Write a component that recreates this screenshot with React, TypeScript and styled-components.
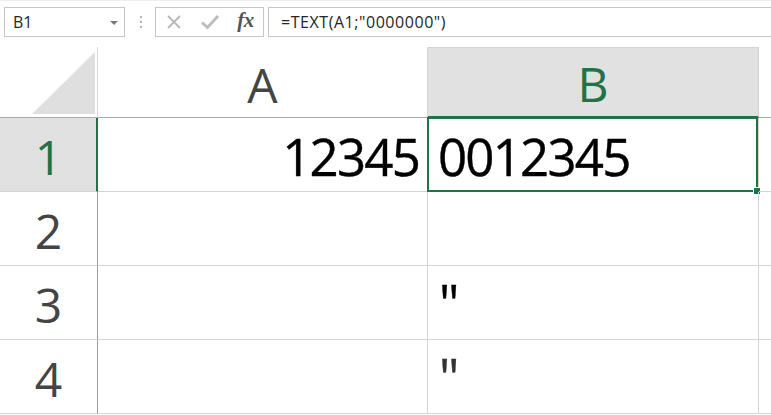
import React from "react";
import styled, { createGlobalStyle } from "styled-components";

const GREEN = "#217346";

const GlobalStyle = createGlobalStyle`
  html, body { margin: 0; padding: 0; background: #fff; }
  body { font-family: "Open Sans", "Noto Sans", sans-serif; overflow: hidden; }
  #root { width: 771px; height: 415px; }
`;

const Page = styled.div`
  width: 771px;
  height: 415px;
  overflow: hidden;
  background: #fff;
  display: flex;
  flex-direction: column;
`;

const FormulaBar = styled.div`
  display: flex;
  align-items: center;
  height: 47px;
  box-sizing: border-box;
  padding: 6px 0 10px 4px;
  border-top: 1px solid #efefef;
  flex-shrink: 0;
`;

const NameBox = styled.div`
  width: 121px;
  height: 30px;
  box-sizing: border-box;
  border: 1px solid #c6c6c6;
  display: flex;
  align-items: center;
  justify-content: space-between;
  padding: 0 6px 0 8px;
  font-size: 16px;
  color: #262626;
`;

const DropArrow = styled.span`
  width: 0;
  height: 0;
  border-left: 4px solid transparent;
  border-right: 4px solid transparent;
  border-top: 4px solid #7a7a7a;
  margin-top: 1px;
`;

const Grip = styled.div`
  display: flex;
  flex-direction: column;
  gap: 3px;
  margin: 0 14px 0 15px;
`;

const GripDot = styled.span`
  width: 2px;
  height: 2px;
  background: #b4b4b4;
`;

const ButtonGroup = styled.div`
  width: 109px;
  height: 30px;
  box-sizing: border-box;
  border: 1px solid #c6c6c6;
  display: grid;
  grid-template-columns: 36px 36px 35px;
  align-items: center;
  justify-items: center;
  margin-left: -1px;
`;

const IconSlot = styled.span`
  display: flex;
  align-items: center;
  justify-content: center;
`;

const Fx = styled.span`
  font-family: "Liberation Serif", "DejaVu Serif", serif;
  font-style: italic;
  font-weight: 700;
  font-size: 21px;
  color: #555;
  letter-spacing: -0.5px;
  margin-top: -3px;
`;

const FormulaInput = styled.div`
  flex: 1;
  height: 30px;
  box-sizing: border-box;
  margin-left: 4px;
  border: 1px solid #c6c6c6;
  border-right: none;
  display: flex;
  align-items: center;
  padding-left: 12px;
  font-size: 16px;
  letter-spacing: 0.55px;
  color: #262626;
`;

const Sheet = styled.div`
  display: grid;
  grid-template-columns: 98px 330px 331px 1fr;
  grid-template-rows: 71px repeat(4, 74px);
`;

const Corner = styled.div`
  box-sizing: border-box;
  border-right: 1px solid #d8d8d8;
  border-bottom: 1px solid #ababab;
  display: flex;
  align-items: flex-end;
  justify-content: flex-end;
  padding: 0 2px 3px 0;
`;

const ColHeader = styled.div<{ $selected?: boolean; $blank?: boolean }>`
  box-sizing: border-box;
  background: ${(p) => (p.$selected ? "#e1e1e1" : "#fff")};
  border-top: 1px solid ${(p) => (p.$selected ? "#d4d4d4" : "#fff")};
  border-right: 1px solid ${(p) => (p.$blank ? "#fff" : "#d4d4d4")};
  border-bottom: ${(p) => (p.$selected ? `2px solid ${GREEN}` : "1px solid #ababab")};
  color: ${(p) => (p.$selected ? GREEN : "#444")};
  font-size: 48px;
  line-height: 1;
  display: flex;
  align-items: center;
  justify-content: center;
  padding-top: 4px;
`;

const RowHeader = styled.div<{ $selected?: boolean }>`
  box-sizing: border-box;
  background: ${(p) => (p.$selected ? "#e1e1e1" : "#fff")};
  border-right: ${(p) => (p.$selected ? `2px solid ${GREEN}` : "1px solid #9b9b9b")};
  border-bottom: 1px solid #d4d4d4;
  color: ${(p) => (p.$selected ? GREEN : "#444")};
  font-size: 48px;
  line-height: 1;
  display: flex;
  align-items: center;
  justify-content: center;
  padding: 4px 0 0 ${(p) => (p.$selected ? "1px" : "0")};
`;

const Cell = styled.div<{ $align?: "left" | "right"; $tone?: string }>`
  position: relative;
  box-sizing: border-box;
  border-right: 1px solid #d4d4d4;
  border-bottom: 1px solid #d4d4d4;
  font-family: "Open Sans", "Noto Sans", sans-serif;
  font-size: 51px;
  letter-spacing: -1.8px;
  line-height: 1;
  color: ${(p) => p.$tone || "#000"};
  display: flex;
  align-items: center;
  justify-content: ${(p) => (p.$align === "right" ? "flex-end" : "flex-start")};
  padding: 3px 8px 0 10px;
  -webkit-text-stroke: 0.4px ${(p) => p.$tone || "#000"};
`;

const Quote = styled.span`
  align-self: flex-start;
  margin-top: 8px;
  letter-spacing: 0;
  padding-left: 1px;
`;

const Selection = styled.div`
  position: absolute;
  top: -1px;
  left: -1px;
  right: 0;
  bottom: -1px;
  border: 2px solid ${GREEN};
  pointer-events: none;
`;

const FillHandle = styled.span`
  position: absolute;
  right: -5px;
  bottom: -5px;
  width: 6px;
  height: 6px;
  background: ${GREEN};
  border: 1px solid #fff;
`;

const CrossIcon = () => (
  <svg width="16" height="16" viewBox="0 0 16 16">
    <path d="M2 2 L14 14 M14 2 L2 14" stroke="#b8b8b8" strokeWidth="1.8" fill="none" />
  </svg>
);

const CheckIcon = () => (
  <svg width="20" height="16" viewBox="0 0 20 16">
    <path d="M2 8.5 L7.5 13.5 L18 2" stroke="#bdbdbd" strokeWidth="3" fill="none" strokeLinejoin="miter" />
  </svg>
);

const CornerTriangle = () => (
  <svg width="63" height="62" viewBox="0 0 63 62">
    <polygon points="63,0 63,62 0,62" fill="#dfdfdf" />
  </svg>
);

export default function App() {
  const rows = [
    { n: 1, a: "12345", b: "0012345", selected: true },
    { n: 2, a: "", b: "" },
    { n: 3, a: "", b: "\"", quote: true, tone: "#000" },
    { n: 4, a: "", b: "\"", quote: true, tone: "#333" },
  ];
  return (
    <Page>
      <GlobalStyle />
      <FormulaBar>
        <NameBox>
          <span>B1</span>
          <DropArrow />
        </NameBox>
        <Grip>
          <GripDot />
          <GripDot />
          <GripDot />
        </Grip>
        <ButtonGroup>
          <IconSlot>
            <CrossIcon />
          </IconSlot>
          <IconSlot>
            <CheckIcon />
          </IconSlot>
          <IconSlot>
            <Fx>fx</Fx>
          </IconSlot>
        </ButtonGroup>
        <FormulaInput>=TEXT(A1;"0000000")</FormulaInput>
      </FormulaBar>
      <Sheet>
        <Corner>
          <CornerTriangle />
        </Corner>
        <ColHeader>A</ColHeader>
        <ColHeader $selected>B</ColHeader>
        <ColHeader $blank />
        {rows.map((r) => (
          <React.Fragment key={r.n}>
            <RowHeader $selected={r.selected}>{r.n}</RowHeader>
            <Cell $align="right">{r.a}</Cell>
            <Cell $tone={r.tone}>
              {r.quote ? <Quote>{r.b}</Quote> : r.b}
              {r.selected && (
                <Selection>
                  <FillHandle />
                </Selection>
              )}
            </Cell>
            <Cell />
          </React.Fragment>
        ))}
      </Sheet>
    </Page>
  );
}
